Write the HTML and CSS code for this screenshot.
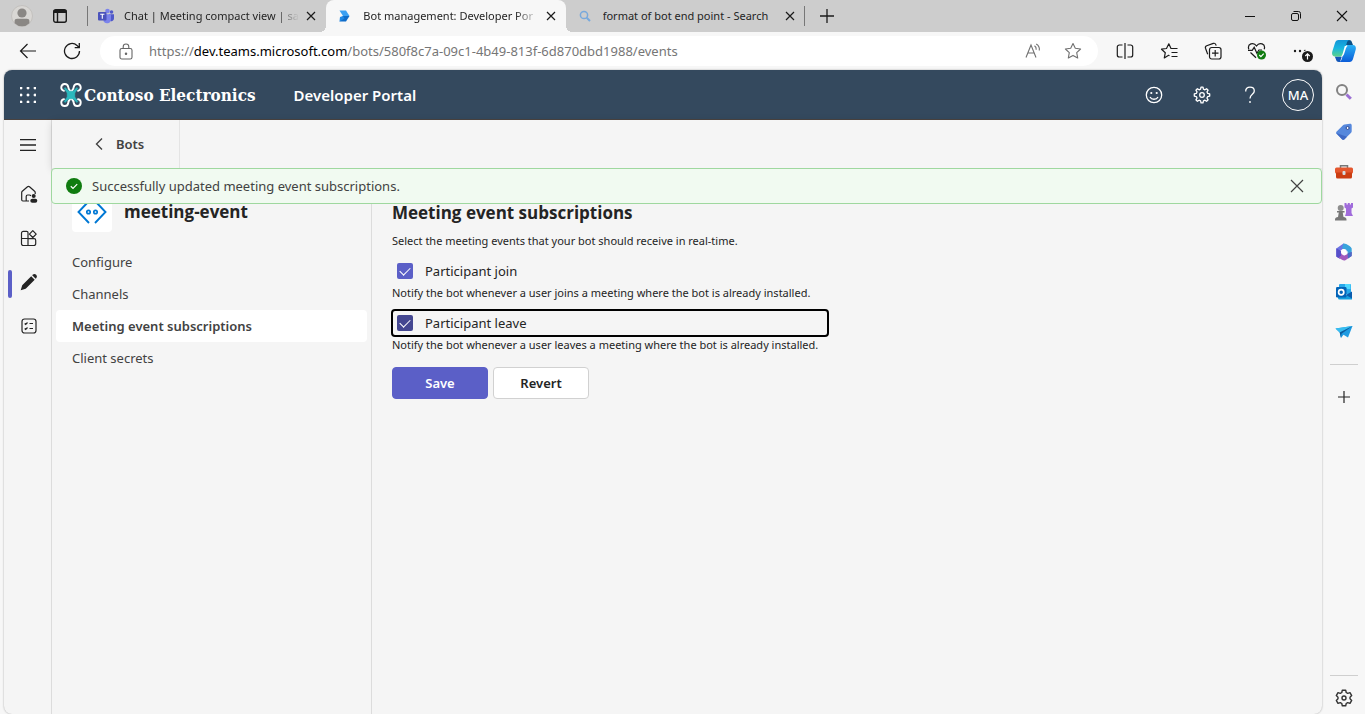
FILE: index.html
```html
<!DOCTYPE html>
<html lang="en">
<head>
<meta charset="utf-8">
<title>Bot management: Developer Portal</title>
<link rel="stylesheet" href="styles.css">
</head>
<body>
<div class="browser">
  <div class="tabstrip">
    <button class="profile" aria-label="Profile">
      <svg width="22" height="22" viewBox="0 0 22 22"><circle cx="11" cy="11" r="10.5" fill="#d9d7d4" stroke="#c3c1be"/><circle cx="11" cy="8" r="4.6" fill="#8a8784"/><path d="M3.6 18.2V16c0-1.500 1-2.200 2.500-2.200h9.800c1.500 0 2.500.7 2.500 2.200v2.200a10.400 10.400 0 0 1-14.800 0z" fill="#8a8784"/></svg>
    </button>
    <button class="workspaces" aria-label="Tab actions">
      <svg width="16" height="16" viewBox="0 0 16 16" fill="none" stroke="#1b1b1b" stroke-width="1.400"><rect x="1.700" y="1.700" width="12.600" height="12.600" rx="2"/><path d="M1.700 3.500h12.600" stroke-width="3"/><path d="M5.500 4v10"/></svg>
    </button>
    <div class="tabs" role="tablist">
      <div class="tab">
        <svg width="16" height="16" viewBox="0 0 16 16"><circle cx="13.500" cy="4" r="1.800" fill="#5059c9"/><circle cx="9.500" cy="3" r="2.300" fill="#7b83eb"/><path d="M11 6.200h5v4.300a2.700 2.700 0 0 1-4.500 2z" fill="#5059c9"/><path d="M6 6.200h7v5a4 4 0 0 1-7.500 2z" fill="#7b83eb"/><rect y="4" width="8.500" height="8.500" rx="1" fill="#4b53bc"/><path d="M2.200 6.300h4.200M4.300 6.300v4.400" stroke="#fff" stroke-width="1.100"/></svg>
        <span class="tab-title faded">Chat | Meeting compact view | sa</span>
        <button class="tab-close" aria-label="Close tab"><svg width="10" height="10" viewBox="0 0 10 10"><path d="M1 1l8 8M9 1l-8 8" stroke="#1b1b1b" stroke-width="1.200"/></svg></button>
      </div>
      <div class="tab active">
        <svg width="16" height="16" viewBox="0 0 16 16"><path d="M2.500 2.500h6.500L12.500 8H6z" fill="#3aa0f3"/><path d="M6 8h6.500L9 13.500H2.500z" fill="#0f6cc9"/><path d="M2.500 13.500L3 9l3-1 1.500 2.500z" fill="#1e88e5"/></svg>
        <span class="tab-title faded">Bot management: Developer Por</span>
        <button class="tab-close" aria-label="Close tab"><svg width="10" height="10" viewBox="0 0 10 10"><path d="M1 1l8 8M9 1l-8 8" stroke="#1b1b1b" stroke-width="1.200"/></svg></button>
      </div>
      <div class="tab">
        <svg width="16" height="16" viewBox="0 0 16 16" fill="none" stroke="#78a9dc" stroke-width="1.500"><circle cx="7" cy="7" r="3.600"/><path d="M9.700 9.700l3.300 3.300" stroke-width="2"/></svg>
        <span class="tab-title">format of bot end point - Search</span>
        <button class="tab-close" aria-label="Close tab"><svg width="10" height="10" viewBox="0 0 10 10"><path d="M1 1l8 8M9 1l-8 8" stroke="#1b1b1b" stroke-width="1.200"/></svg></button>
      </div>
    </div>
    <button class="new-tab" aria-label="New tab"><svg width="16" height="16" viewBox="0 0 16 16"><path d="M8 1v14M1 8h14" stroke="#1b1b1b" stroke-width="1.300"/></svg></button>
    <div class="window-controls">
      <button aria-label="Minimize"><svg width="12" height="12" viewBox="0 0 12 12"><path d="M1 6.500h10" stroke="#111"/></svg></button>
      <button aria-label="Restore"><svg width="12" height="12" viewBox="0 0 12 12" fill="none" stroke="#111"><rect x="1.500" y="3.500" width="7" height="7" rx="1.500"/><path d="M3.500 1.500h5a2 2 0 0 1 2 2v5"/></svg></button>
      <button aria-label="Close window"><svg width="12" height="12" viewBox="0 0 12 12"><path d="M1 1l10 10M11 1L1 11" stroke="#111" stroke-width="1.100"/></svg></button>
    </div>
  </div>

  <div class="toolbar">
    <button class="tool" aria-label="Back"><svg width="18" height="18" viewBox="0 0 18 18" fill="none" stroke="#1b1b1b" stroke-width="1.200"><path d="M17 9H2M8.500 2L1.500 9l7 7"/></svg></button>
    <button class="tool" aria-label="Refresh"><svg width="18" height="18" viewBox="0 0 18 18" fill="none" stroke="#1b1b1b" stroke-width="1.300"><path d="M16.500 9a7.500 7.500 0 1 1-2.500-5.600L16 5.500M16.300 1v4.700h-4.600"/></svg></button>
    <div class="address">
      <button class="lock" aria-label="Site information"><svg width="14" height="17" viewBox="0 0 14 17" fill="none" stroke="#666" stroke-width="1.100"><rect x="1" y="5.500" width="12" height="10.500" rx="1.800"/><path d="M4.200 5.500V3.800a2.800 2.800 0 0 1 5.600 0v1.700"/><circle cx="7" cy="10.800" r=".7" fill="#666"/></svg></button>
      <div class="url" role="textbox" aria-label="Address" tabindex="0">https://<span class="host">dev.teams.microsoft.com</span>/bots/580f8c7a-09c1-4b49-813f-6d870dbd1988/events</div>
      <button class="address-tool" aria-label="Read aloud"><svg width="17" height="16" viewBox="0 0 17 16" fill="none" stroke="#707070" stroke-width="1.100"><path d="M1 14.500L6 2l5 12.500M2.800 10h6.400M9.500 2.800c1.500 1 1.900 2.300 1.700 3.900M11.200 1c2.700 1.500 3.500 3.800 3.100 6.500"/></svg></button>
      <button class="address-tool" aria-label="Add to favorites"><svg width="18" height="18" viewBox="0 0 18 18" fill="none" stroke="#707070" stroke-width="1.100" stroke-linejoin="round"><path d="M9 1.500l2.300 4.800 5.300.7-3.900 3.700 1 5.300L9 13.400 4.300 16l1-5.300L1.400 7l5.300-.7z"/></svg></button>
    </div>
    <button class="tool" aria-label="Split screen"><svg width="18" height="18" viewBox="0 0 18 18" fill="none" stroke="#1b1b1b" stroke-width="1.200"><path d="M6.500 3H3.300a2 2 0 0 0-2 2v8a2 2 0 0 0 2 2h3.200M11.500 3h3.200a2 2 0 0 1 2 2v8a2 2 0 0 1-2 2h-3.200M9 1v16"/></svg></button>
    <button class="tool" aria-label="Favorites"><svg width="18" height="18" viewBox="0 0 18 18" fill="none" stroke="#1b1b1b" stroke-width="1.200" stroke-linejoin="round"><path d="M9.500 13.800L8.600 13.300 4.300 15.900l1-5.200L1.500 7.200l5-.7 2.300-4.700L11 6.500h6.500M11.500 10.500h6M11.500 14.500h6"/></svg></button>
    <button class="tool" aria-label="Collections"><svg width="18" height="18" viewBox="0 0 18 18" fill="none" stroke="#1b1b1b" stroke-width="1.200"><rect x="5.500" y="5.500" width="11.500" height="11.500" rx="2.200"/><path d="M11.200 8v6.500M8 11.200h6.500M3.700 12.300L1.500 6.200a2 2 0 0 1 1.200-2.500l6.600-2.300a2 2 0 0 1 2.500 1.200l.4 1"/></svg></button>
    <button class="tool" aria-label="Browser essentials"><svg width="20" height="18" viewBox="0 0 20 18" fill="none" stroke="#1b1b1b" stroke-width="1.200"><path d="M1.800 7.200C0 2 6.500-.6 9.500 4c3-4.600 9.500-2 7.700 3.200M1 8.300h4.200l2-3 2.700 6 2-3.300H15M3.500 10.500l5.500 5.300"/><circle cx="14.500" cy="13" r="4.500" fill="#107c10" stroke="none"/><path d="M12.300 13l1.600 1.600 2.800-3" stroke="#fff"/></svg></button>
    <button class="tool" aria-label="Settings and more"><svg width="24" height="22" viewBox="0 0 24 22"><g fill="#1b1b1b"><circle cx="6" cy="11" r="1.200"/><circle cx="11" cy="11" r="1.200"/><circle cx="16" cy="11" r="1.200"/><circle cx="18.500" cy="16.500" r="6.500" fill="#f7f7f7"/><circle cx="18.500" cy="16.500" r="5.500"/></g><path d="M18.500 19.500V14M16.300 16l2.200-2.200 2.200 2.200" stroke="#fff" stroke-width="1.200" fill="none"/></svg></button>
    <button class="copilot" aria-label="Copilot"><svg width="24" height="22" viewBox="0 0 24 22">
      <defs>
        <linearGradient id="cpa" x1="0" y1="0" x2="0" y2="1"><stop offset="0" stop-color="#1394d6"/><stop offset=".5" stop-color="#18b5e0"/><stop offset="1" stop-color="#5bd38a"/></linearGradient>
        <linearGradient id="cpb" x1="0" y1="0" x2="0" y2="1"><stop offset="0" stop-color="#28b0f5"/><stop offset="1" stop-color="#0b5cd8"/></linearGradient>
      </defs>
      <path d="M14 0h3c2 0 2.700 1.200 3.200 3l.8 2h-7z" fill="#0a5187"/><path d="M8 22H7c-2 0-2.700-1.200-3.200-3l-1-2.500h7z" fill="#1457b8"/><path d="M6.500 0H18c-2 0-2.800 1.500-3.300 3.300L11.500 13c-.7 2.400-1.600 3.500-3.500 3.500H3C.3 16.500-.4 14 .3 11.500L3 3C3.600 1 4.700 0 6.500 0z" fill="url(#cpa)"/><path d="M17.500 22H6.500c2 0 2.800-1.500 3.300-3.300L13 8.500c.7-2.400 1.600-3.500 3.500-3.500H21c2.700 0 3.300 2.500 2.600 5L21 19c-.6 2-1.700 3-3.500 3z" fill="url(#cpb)"/><path d="M12.800 6h2.700c-.9.600-1.300 1.500-1.800 3l-1.600 5c-.4 1.200-1 2-2.200 2.500H8.500c1.300-.3 1.700-1.500 2.200-3z" fill="#fff"/></svg></button>
  </div>

  <div class="body">
    <div class="page">
      <header class="suite-header">
        <button class="waffle" aria-label="App launcher"><svg width="16" height="16" viewBox="0 0 16 16" fill="#fff"><path d="M0 0h2v2H0zM7 0h2v2H7zM14 0h2v2h-2zM0 7h2v2H0zM7 7h2v2H7zM14 7h2v2h-2zM0 14h2v2H0zM7 14h2v2H7zM14 14h2v2h-2z" stroke="#fff" stroke-width=".6"/></svg></button>
        <a class="brand" href="#"><svg width="22" height="26" viewBox="0 0 22 26" fill="none"><g stroke="#fff" stroke-width="1.900" stroke-linecap="round"><path d="M4 8.900A3.500 3.500 0 1 1 8.200 4.800Q8.300 7 10.200 9"/><path d="M18 8.900A3.500 3.500 0 1 0 13.800 4.800Q13.700 7 11.800 9"/><path d="M4 17.100A3.500 3.500 0 1 0 8.200 21.200Q8.300 19 10.200 17"/><path d="M18 17.100A3.500 3.500 0 1 1 13.800 21.200Q13.700 19 11.800 17"/></g><path d="M5 5.500l4 3.700h4l4-3.700.8 1-3 4.500v4l3 4.500-.8 1-4-3.700H9l-4 3.700-.8-1 3-4.500v-4l-3-4.500z" fill="#2bb8bd" stroke="#2bb8bd" stroke-width=".6" stroke-linejoin="round"/></svg><span>Contoso Electronics</span></a>
        <a class="app-name" href="#">Developer Portal</a>
        <div class="header-actions">
          <button aria-label="Feedback"><svg width="18" height="18" viewBox="0 0 18 18" fill="none" stroke="#fff" stroke-width="1.300"><circle cx="9" cy="9" r="7.700"/><path d="M5 11c1.500 3 6.500 3 8 0"/><g fill="#fff" stroke="none"><circle cx="6.300" cy="7" r="1.100"/><circle cx="11.700" cy="7" r="1.100"/></g></svg></button>
          <button aria-label="Settings"><svg width="18" height="18" viewBox="0 0 18 18" fill="none" stroke="#fff" stroke-width="1.300" stroke-linejoin="round"><path d="M7.600 3.200L8 1.200h2l.4 2 1.500.6 1.700-1.100 1.500 1.500L14 5.900l.7 1.500 2 .5v2.200l-2 .5-.7 1.500 1.100 1.700-1.500 1.500-1.700-1.100-1.500.6-.4 2H8l-.4-2-1.500-.6-1.700 1.100-1.500-1.500L4 12.100l-.7-1.500-2-.5V7.900l2-.5L4 5.900 2.900 4.200l1.500-1.500 1.700 1.100z"/><circle cx="9" cy="9" r="2.300"/></svg></button>
          <button aria-label="Help"><svg width="12" height="18" viewBox="0 0 12 18" fill="none" stroke="#fff" stroke-width="1.300"><path d="M1.700 5.500C1.500 2.700 3.300 1.200 6 1.200c2.500 0 4.300 1.500 4.300 3.700C10.300 8.300 6 8.300 6 12.500"/><circle cx="6" cy="16" r=".9" fill="#fff" stroke="none"/></svg></button>
          <button class="account" aria-label="Account">MA</button>
        </div>
      </header>

      <div class="portal">
        <nav class="rail" aria-label="Main">
          <button class="menu" aria-label="Menu"><svg width="16" height="12" viewBox="0 0 16 12"><path d="M0 .7h16M0 6h16M0 11.300h16" stroke="#242424" stroke-width="1.300"/></svg></button>
          <a href="#" aria-label="Home"><svg width="18" height="18" viewBox="0 0 18 18" fill="none" stroke="#242424" stroke-width="1.200" stroke-linejoin="round"><path d="M9 16H6.200v-4.500c0-1 .6-1.500 1.500-1.500h1.600c.8 0 1.300.3 1.500 1M15.200 9V7.600c0-.6-.2-1-.6-1.400L9.500 1.800a1.600 1.600 0 0 0-2 0L2.300 6.200c-.4.4-.6.8-.6 1.400v7.200c0 .7.500 1.200 1.200 1.200h3.300"/><g fill="#242424" stroke="none"><circle cx="13.700" cy="11" r="2"/><rect x="10.300" y="13.800" width="7" height="4" rx="2"/></g></svg></a>
          <a href="#" aria-label="Apps"><svg width="18" height="18" viewBox="0 0 18 18" fill="none" stroke="#242424" stroke-width="1.200" stroke-linejoin="round"><path d="M8 9.500V3.600A1.300 1.300 0 0 0 6.700 2.300H3.300A1.800 1.800 0 0 0 1.500 4.100v10.600a1.800 1.800 0 0 0 1.800 1.800h10.600a1.800 1.800 0 0 0 1.800-1.800v-3.500a1.600 1.600 0 0 0-1.600-1.600zM8 9.500v7M1.500 9.500H8M12.800 1.700l3.400 3.400-3.400 3.400-3.400-3.400z"/></svg></a>
          <a class="current" href="#" aria-label="Tools"><svg width="18" height="18" viewBox="0 0 18 18" fill="#242424"><path d="M11.200 3.300l3.500 3.500-8.500 8.500c-.4.400-.8.600-1.300.7L.7 17.300 2 13.100c.1-.5.300-.9.700-1.300zM12.200 2.300l.7-.7a2.500 2.500 0 0 1 3.500 3.500l-.7.7z"/></svg></a>
          <a href="#" aria-label="Tasks"><svg width="16" height="16" viewBox="0 0 16 16" fill="none" stroke="#242424" stroke-width="1.200"><rect x="1" y="1" width="14" height="14" rx="2.500"/><path d="M3.700 5.500l1 1 1.800-2M8.500 5.500H12M3.700 10.500l1 1 1.800-2M8.500 10.500H12"/></svg></a>
        </nav>

        <div class="workspace">
          <div class="crumbs">
            <a class="crumb" href="#"><svg width="8" height="14" viewBox="0 0 8 14" fill="none" stroke="#424242" stroke-width="1.400"><path d="M7 1.500L1.500 7 7 12.500"/></svg>Bots</a>
          </div>
          <div class="notice" role="status">
            <svg width="16" height="16" viewBox="0 0 16 16"><circle cx="8" cy="8" r="8" fill="#107c10"/><path d="M4.800 8.300l2.200 2.100 4.200-4.300" fill="none" stroke="#fff" stroke-width="1.200"/></svg>
            <span>Successfully updated meeting event subscriptions.</span>
            <button aria-label="Dismiss"><svg width="14" height="14" viewBox="0 0 14 14"><path d="M1 1l12 12M13 1L1 13" stroke="#424242" stroke-width="1.200"/></svg></button>
          </div>
          <div class="columns">
            <aside class="side">
              <div class="bot">
                <div class="bot-icon"><svg width="30" height="24" viewBox="0 0 30 24" fill="none" stroke="#0078d4" stroke-width="1.900"><path d="M12 1L1.500 12 12 23M18 1l10.500 11L18 23"/><g stroke-width="1.700"><circle cx="11.500" cy="12" r="1.700"/><circle cx="18.500" cy="12" r="1.700"/></g></svg></div>
                <h2>meeting-event</h2>
              </div>
              <nav class="side-nav" aria-label="Bot">
                <a href="#">Configure</a>
                <a href="#">Channels</a>
                <a class="selected" href="#">Meeting event subscriptions</a>
                <a href="#">Client secrets</a>
              </nav>
            </aside>
            <main class="content">
              <h1>Meeting event subscriptions</h1>
              <p>Select the meeting events that your bot should receive in real-time.</p>
              <form class="events">
                <label class="check" for="join"><input type="checkbox" id="join" checked>Participant join</label>
                <p>Notify the bot whenever a user joins a meeting where the bot is already installed.</p>
                <label class="check focused" for="leave"><input type="checkbox" id="leave" checked>Participant leave</label>
                <p>Notify the bot whenever a user leaves a meeting where the bot is already installed.</p>
                <div class="buttons">
                  <button type="button" class="btn primary">Save</button>
                  <button type="button" class="btn">Revert</button>
                </div>
              </form>
            </main>
          </div>
        </div>
      </div>
    </div>

    <aside class="sidebar">
      <button aria-label="Search"><svg width="18" height="18" viewBox="0 0 18 18" fill="none"><circle cx="7" cy="7" r="5" stroke="#828282" stroke-width="2"/><path d="M11.500 11.500l4.300 4.300" stroke="#9b6fd3" stroke-width="3"/></svg></button>
      <button aria-label="Shopping"><svg width="18" height="18" viewBox="0 0 18 18"><path d="M9.500 1.500L15 .8c1-.1 1.700.5 1.700 1.500v6c0 .6-.2 1-.6 1.400l-6.600 6.500c-.8.8-1.700.8-2.500 0L1.700 11c-.8-.8-.8-1.700 0-2.500L8 2.200c.4-.4.9-.6 1.500-.7z" fill="#5688dc"/><path d="M1.200 10L7 16.200c.8.8 1.700.8 2.500 0l2.500-2.500z" fill="#3f69c4"/><circle cx="12.600" cy="5" r="1.500" fill="#fff" stroke="#2b4792"/></svg></button>
      <button aria-label="Tools"><svg width="18" height="16" viewBox="0 0 18 16"><path d="M5.500 4V1.700h7V4" fill="none" stroke="#777" stroke-width="1.500"/><rect y="3.500" width="18" height="6" rx="1.500" fill="#e4572e"/><path d="M1 8.500h16v4.500a1.500 1.500 0 0 1-1.500 1.500h-13A1.500 1.500 0 0 1 1 13z" fill="#cb3d12"/><rect x="7.500" y="7" width="3" height="4" rx="1" fill="#d5dde2"/></svg></button>
      <button aria-label="Games"><svg width="18" height="18" viewBox="0 0 18 18"><path d="M9.500 0h2v1.500h1.300V0h2v1.500H16V0h2v4.500l-1.500 1V10l1.500 3h-8l1-3V5.500l-1.500-1z" fill="#a06bdb"/><circle cx="5.700" cy="5" r="3" fill="#8d8d8d"/><path d="M2 8h7.500v1.500H7.700l.8 4.500c1.800.3 3 1 3 2.500v1H0v-1C0 15 1.200 14.300 3 14l.8-4.500H2z" fill="#777"/></svg></button>
      <button aria-label="Microsoft 365"><svg width="18" height="18" viewBox="0 0 18 18"><path d="M8.500.5l7.500 4.200L11 9 9 5.500 5.500 7.400 5 16 1.300 13.500v-8z" fill="#6b74e2"/><path d="M8.500.5c2.500-.4 8.200 3.500 8.200 5V11l-4.200-1.500V8L7 5z" fill="#38a4dc"/><path d="M16.700 9v4l-6.300 4.200c-1 .6-2 .5-3-.1L1.500 13.500 6 9.500 9 12.700z" fill="#a25bbd"/><path d="M1.300 5.200L6 8v4.300L3.500 15l-2.200-1.500z" fill="#574fc9"/><path d="M12.500 10l4.200-1v4l-3.700 2.500z" fill="#476dc7"/><circle cx="9" cy="9" r="2.900" fill="#fff"/></svg></button>
      <button aria-label="Outlook"><svg width="18" height="18" viewBox="0 0 18 18"><rect x="4" y="1" width="12" height="10" rx="1" fill="#28a8ea"/><path d="M10 1h5.500v5H10z" fill="#50d9ff"/><path d="M3 9l7 4 7-4v7.500H4.500A1.500 1.500 0 0 1 3 15z" fill="#149fdf"/><path d="M17 8.500v7L11 12z" fill="#0a5cad"/><rect x="1" y="4" width="10.500" height="10.500" rx="1.200" fill="#0364b8"/><circle cx="6.200" cy="9.200" r="2.600" fill="none" stroke="#fff" stroke-width="1.700"/></svg></button>
      <button aria-label="Drop"><svg width="18" height="14" viewBox="0 0 18 14"><path d="M.5 3.500L17.500 1 13 12.500 8.500 9.800 6 13 4.700 7.500z" fill="#1e9be2"/><path d="M17.500 1L4.700 7.500.5 3.500z" fill="#37bdf0"/><path d="M17.500 1L6.500 8.800 6 13 4.700 7.500z" fill="#0b5a9d"/></svg></button>
      <hr>
      <button aria-label="Customize"><svg width="14" height="14" viewBox="0 0 14 14"><path d="M7 1v12M1 7h12" stroke="#242424" stroke-width="1.200"/></svg></button>
      <hr class="push">
      <button class="settings" aria-label="Sidebar settings"><svg width="18" height="18" viewBox="0 0 18 18" fill="none" stroke="#333" stroke-width="1.400" stroke-linejoin="round"><path d="M7.300 1.200h3.400l.5 2.300 1.500.9 2.300-.7 1.700 2.900L15 8.200v1.600l1.700 1.600-1.700 2.900-2.300-.7-1.500.9-.5 2.300H7.300l-.5-2.300-1.500-.9-2.300.7-1.700-2.900L3 9.800V8.200L1.300 6.600 3 3.700l2.300.7 1.500-.9z"/><circle cx="9" cy="9" r="2"/></svg></button>
    </aside>
  </div>
</div>
</body>
</html>
```
FILE: styles.css
```css
* {
  box-sizing: border-box;
}

body {
  margin: 0;
  font-family: "Noto Sans", "Open Sans", sans-serif;
  font-size: 13px;
  line-height: 20px;
  color: #242424;
  background: #f7f7f7;
}

button {
  display: flex;
  align-items: center;
  justify-content: center;
  padding: 0;
  border: 0;
  background: none;
  color: inherit;
  font: inherit;
}

a {
  color: inherit;
  text-decoration: none;
}

h1,
h2,
p {
  margin: 0;
}

svg {
  flex: none;
}

.browser {
  display: flex;
  flex-direction: column;
  height: 100vh;
  overflow: hidden;
}

/* Tab strip */

.tabstrip {
  display: flex;
  flex: none;
  height: 32px;
  background: #cdcdcd;
}

.profile {
  width: 44px;
}

.workspaces {
  width: 32px;
}

.tabs {
  display: flex;
  flex: 0 1 718px;
  min-width: 0;
  margin-left: 11px;
  font-size: 11px;
}

.tab {
  position: relative;
  display: flex;
  flex: 1 1 0;
  align-items: center;
  min-width: 0;
  padding: 0 7px 0 11px;
}

.tab:first-child::before,
.tab:last-child::after {
  content: "";
  position: absolute;
  top: 6px;
  bottom: 6px;
  width: 1px;
  background: #777;
}

.tab:first-child::before {
  left: 0;
}

.tab:last-child::after {
  right: 0;
}

.tab.active {
  z-index: 1;
  border-radius: 8px 8px 0 0;
  background: #f7f7f7;
}

.tab.active::before,
.tab.active::after {
  content: "";
  position: absolute;
  bottom: 0;
  width: 6px;
  height: 6px;
}

.tab.active::before {
  right: 100%;
  background: radial-gradient(circle at 0 0, #cdcdcd 6px, #f7f7f7 6px);
}

.tab.active::after {
  left: 100%;
  background: radial-gradient(circle at 100% 0, #cdcdcd 6px, #f7f7f7 6px);
}

.tab-title {
  flex: 1;
  min-width: 0;
  margin: 0 4px 0 10px;
  overflow: hidden;
  white-space: nowrap;
}

.tab-title.faded {
  mask-image: linear-gradient(to left, transparent, #000 24px);
}

.tab-close {
  width: 16px;
  height: 16px;
}

.new-tab {
  width: 44px;
}

.window-controls {
  display: flex;
  margin-left: auto;
}

.window-controls button {
  width: 46px;
}

/* Toolbar */

.toolbar {
  display: flex;
  flex: none;
  align-items: center;
  height: 38px;
  padding-left: 6px;
}

.tool {
  width: 44px;
  height: 32px;
}

.copilot {
  width: 42px;
  height: 32px;
}

.address {
  display: flex;
  flex: 1;
  align-items: center;
  height: 30px;
  min-width: 0;
  margin: 0 5px 0 6px;
  padding: 0 5px 0 12px;
  border-radius: 15px;
  background: #fff;
}

.lock {
  width: 28px;
}

.url {
  flex: 1;
  min-width: 0;
  margin-left: 9px;
  overflow: hidden;
  color: #767676;
  white-space: nowrap;
}

.host {
  color: #000;
}

.address-tool {
  width: 40px;
}

/* Page */

.body {
  display: flex;
  flex: 1;
  min-height: 0;
}

.page {
  display: flex;
  flex: 1;
  flex-direction: column;
  min-width: 0;
  margin-left: 4px;
  border-radius: 8px;
  background: #f5f5f5;
  box-shadow: 0 0 2px rgba(0, 0, 0, 0.35);
  overflow: hidden;
}

.suite-header {
  display: flex;
  flex: none;
  align-items: center;
  height: 50px;
  border-bottom: 1px solid #4a4340;
  background: #34495e;
  color: #fff;
}

.waffle {
  width: 48px;
  height: 48px;
}

.brand {
  display: flex;
  align-items: center;
  gap: 2px;
  margin-left: 8px;
  font-family: "DejaVu Serif Condensed", "DejaVu Serif", serif;
  font-size: 17px;
  font-weight: 700;
  white-space: nowrap;
}

.app-name {
  margin-left: 38px;
  font-size: 15px;
  font-weight: 600;
  white-space: nowrap;
}

.header-actions {
  display: flex;
  align-items: center;
  margin-left: auto;
}

.header-actions button {
  width: 48px;
  height: 48px;
}

.header-actions .account {
  width: 32px;
  height: 32px;
  margin: 0 8px;
  border: 1px solid #fff;
  border-radius: 50%;
  font-weight: 500;
}

.portal {
  display: flex;
  flex: 1;
  min-height: 0;
}

.rail {
  display: flex;
  flex: none;
  flex-direction: column;
  width: 48px;
  border-right: 1px solid #dcdcdc;
}

.menu {
  height: 50px;
  margin-bottom: 2px;
}

.rail a {
  position: relative;
  display: flex;
  align-items: center;
  justify-content: center;
  height: 44px;
  padding-left: 3px;
}

.rail .current::before {
  content: "";
  position: absolute;
  top: 10px;
  left: 4px;
  width: 4px;
  height: 28px;
  border-radius: 2px;
  background: #5b5fc7;
}

.workspace {
  position: relative;
  display: flex;
  flex: 1;
  flex-direction: column;
  min-width: 0;
}

.crumbs {
  display: flex;
  flex: none;
  height: 48px;
  box-shadow: 0 2px 8px rgba(0, 0, 0, 0.14);
}

.crumb {
  display: flex;
  align-items: center;
  gap: 13px;
  padding: 0 35px 0 43px;
  border-right: 1px solid #e4e4e4;
  color: #424242;
  font-weight: 600;
}

.notice {
  position: absolute;
  top: 48px;
  right: 0;
  left: -1px;
  display: flex;
  align-items: center;
  gap: 10px;
  height: 36px;
  padding: 0 8px 0 14px;
  border: 1px solid #9fd89f;
  border-radius: 4px;
  background: #f1faf1;
  color: #424242;
}

.notice button {
  width: 32px;
  height: 32px;
  margin-left: auto;
}

.columns {
  display: flex;
  flex: 1;
  min-height: 0;
}

.side {
  flex: none;
  width: 320px;
  padding: 24px 4px 0;
  border-right: 1px solid #dcdcdc;
}

.bot {
  display: flex;
  align-items: center;
  gap: 12px;
  padding-left: 16px;
}

.bot-icon {
  display: flex;
  align-items: center;
  justify-content: center;
  width: 40px;
  height: 40px;
  border-radius: 4px;
  background: #fff;
}

h1,
h2 {
  font-family: "Open Sans", "Noto Sans", sans-serif;
  font-size: 17px;
  font-weight: 700;
  line-height: 24px;
}

.side-nav {
  margin-top: 14px;
  color: #424242;
}

.side-nav a {
  display: block;
  padding: 6px 16px;
  border-radius: 4px;
}

.side-nav .selected {
  background: #fff;
  font-weight: 600;
}

.content {
  flex: 1;
  min-width: 0;
  padding: 33px 20px 0;
}

.content p {
  font-size: 11px;
  line-height: 16px;
}

.content h1 {
  margin-bottom: 8px;
}

.events {
  display: flex;
  flex-direction: column;
  width: fit-content;
  min-width: 436px;
}

.check {
  display: flex;
  align-items: center;
  gap: 12px;
  height: 26px;
  margin: 9px 0 1px;
  padding-left: 5px;
  border-radius: 3px;
}

.check input {
  display: grid;
  place-items: center;
  width: 16px;
  height: 16px;
  margin: 0;
  border-radius: 2px;
  background: #5b5fc7;
  appearance: none;
}

.check input:checked::before {
  content: "";
  width: 9px;
  height: 5px;
  margin-bottom: 3px;
  border: solid #fff;
  border-width: 0 0 1px 1px;
  transform: rotate(-45deg);
}

.check.focused {
  outline: 2px solid #000;
  outline-offset: -1px;
}

.check.focused input {
  background: #444791;
}

.buttons {
  display: flex;
  gap: 5px;
  margin-top: 14px;
}

.btn {
  width: 96px;
  height: 32px;
  border: 1px solid #d1d1d1;
  border-radius: 4px;
  background: #fff;
  font-weight: 600;
}

.btn.primary {
  border-color: #5b5fc7;
  background: #5b5fc7;
  color: #fff;
}

/* Browser sidebar */

.sidebar {
  display: flex;
  flex: none;
  flex-direction: column;
  align-items: center;
  width: 43px;
  padding-top: 2px;
}

.sidebar button {
  width: 40px;
  height: 40px;
}

.sidebar hr {
  width: 28px;
  margin: 12px 0;
  border: 0;
  border-top: 1px solid #cfcfcf;
}

.sidebar hr.push {
  margin: auto 0 6px;
}

.sidebar .settings {
  flex: none;
  height: 32px;
}
```
